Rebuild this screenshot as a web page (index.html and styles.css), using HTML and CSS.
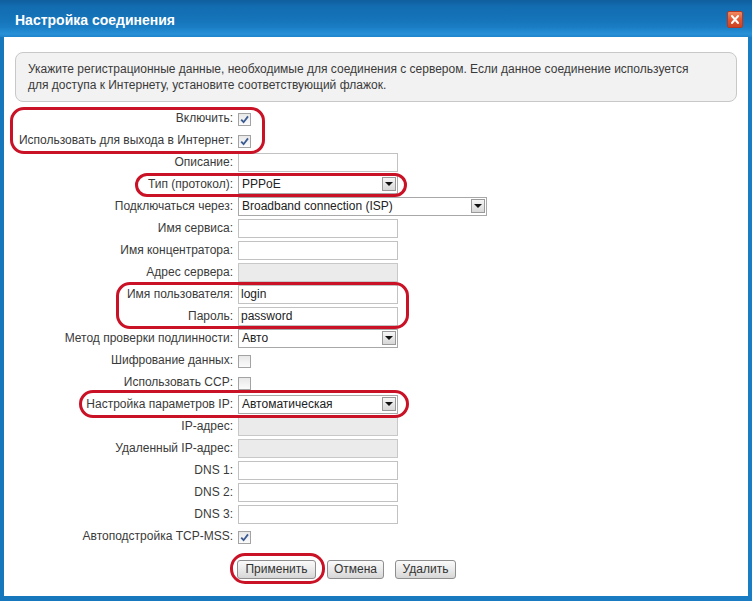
FILE: index.html
```html
<!DOCTYPE html>
<html lang="ru">
<head>
<meta charset="utf-8">
<title>Настройка соединения</title>
<link rel="stylesheet" href="styles.css">
</head>
<body>
<div class="window">
  <div class="titlebar">
    <span class="title">Настройка соединения</span>
    <span class="close"><svg viewBox="0 0 16 17" width="16" height="17"><path d="M4.5 4.5 L11.5 12.5 M11.5 4.5 L4.5 12.5" stroke="#fff" stroke-width="2.2" stroke-linecap="round"/></svg></span>
  </div>
  <div class="content">
    <div class="info">Укажите регистрационные данные, необходимые для соединения с сервером. Если данное соединение используется для доступа к Интернету, установите соответствующий флажок.</div>
    <div class="form">
      <label class="lbl">Включить:</label>
      <div class="fld"><span class="cb on"><svg viewBox="0 0 13 13" width="13" height="13"><path d="M3.2 6.6 L5.6 9.2 L10 3.4" fill="none" stroke="#3a5a92" stroke-width="1.8"/></svg></span></div>

      <label class="lbl">Использовать для выхода в Интернет:</label>
      <div class="fld"><span class="cb on"><svg viewBox="0 0 13 13" width="13" height="13"><path d="M3.2 6.6 L5.6 9.2 L10 3.4" fill="none" stroke="#3a5a92" stroke-width="1.8"/></svg></span></div>

      <label class="lbl">Описание:</label>
      <div class="fld"><span class="inp"></span></div>

      <label class="lbl">Тип (протокол):</label>
      <div class="fld"><span class="sel"><span class="val">PPPoE</span><span class="arr"><svg viewBox="0 0 8 4" width="8" height="4"><path d="M0 0 H8 L4 4 Z" fill="#111"/></svg></span></span></div>

      <label class="lbl">Подключаться через:</label>
      <div class="fld"><span class="sel wide"><span class="val">Broadband connection (ISP)</span><span class="arr"><svg viewBox="0 0 8 4" width="8" height="4"><path d="M0 0 H8 L4 4 Z" fill="#111"/></svg></span></span></div>

      <label class="lbl">Имя сервиса:</label>
      <div class="fld"><span class="inp"></span></div>

      <label class="lbl">Имя концентратора:</label>
      <div class="fld"><span class="inp"></span></div>

      <label class="lbl">Адрес сервера:</label>
      <div class="fld"><span class="inp dis"></span></div>

      <label class="lbl">Имя пользователя:</label>
      <div class="fld"><span class="inp">login</span></div>

      <label class="lbl">Пароль:</label>
      <div class="fld"><span class="inp">password</span></div>

      <label class="lbl">Метод проверки подлинности:</label>
      <div class="fld"><span class="sel"><span class="val">Авто</span><span class="arr"><svg viewBox="0 0 8 4" width="8" height="4"><path d="M0 0 H8 L4 4 Z" fill="#111"/></svg></span></span></div>

      <label class="lbl">Шифрование данных:</label>
      <div class="fld"><span class="cb"></span></div>

      <label class="lbl">Использовать CCP:</label>
      <div class="fld"><span class="cb"></span></div>

      <label class="lbl">Настройка параметров IP:</label>
      <div class="fld"><span class="sel"><span class="val">Автоматическая</span><span class="arr"><svg viewBox="0 0 8 4" width="8" height="4"><path d="M0 0 H8 L4 4 Z" fill="#111"/></svg></span></span></div>

      <label class="lbl">IP-адрес:</label>
      <div class="fld"><span class="inp dis"></span></div>

      <label class="lbl">Удаленный IP-адрес:</label>
      <div class="fld"><span class="inp dis"></span></div>

      <label class="lbl">DNS 1:</label>
      <div class="fld"><span class="inp"></span></div>

      <label class="lbl">DNS 2:</label>
      <div class="fld"><span class="inp"></span></div>

      <label class="lbl">DNS 3:</label>
      <div class="fld"><span class="inp"></span></div>

      <label class="lbl">Автоподстройка TCP-MSS:</label>
      <div class="fld"><span class="cb on"><svg viewBox="0 0 13 13" width="13" height="13"><path d="M3.2 6.6 L5.6 9.2 L10 3.4" fill="none" stroke="#3a5a92" stroke-width="1.8"/></svg></span></div>
    </div>
    <div class="buttons">
      <span class="btn b1">Применить</span>
      <span class="btn b2">Отмена</span>
      <span class="btn b3">Удалить</span>
    </div>
  </div>
  <div class="mark m1"></div>
  <div class="mark m2"></div>
  <div class="mark m3"></div>
  <div class="mark m4"></div>
  <div class="mark m5"></div>
</div>
</body>
</html>
```
FILE: styles.css
```css
html, body {
  margin: 0;
  padding: 0;
  width: 752px;
  height: 601px;
  overflow: hidden;
  background: #fff;
}
.window {
  position: relative;
  width: 752px;
  height: 601px;
  box-sizing: border-box;
  background: linear-gradient(to right, #1777bd, #1a7cc2);
  display: flex;
  flex-direction: column;
  font-family: "Liberation Sans", Arial, sans-serif;
  font-size: 12px;
  color: #3a3a3a;
}
.titlebar {
  height: 37px;
  flex: none;
  display: flex;
  align-items: center;
  justify-content: space-between;
  padding: 0 9px 0 15px;
  box-sizing: border-box;
  background: linear-gradient(to bottom, #0f5d9c 0px, #136cb0 6px, #1574ba 20px, #1a7dc4 27px, #2089cf 31px, #2790d6 34px, #1e84cc 37px);
}
.title {
  color: #fff;
  font-weight: bold;
  font-size: 14px;
  margin-top: 2px;
}
.close {
  width: 16px;
  height: 17px;
  margin-top: 1px;
  box-sizing: border-box;
  border: 1px solid #b03a25;
  border-radius: 2px;
  background: linear-gradient(to bottom, #f08a62, #e0532e 55%, #cc4424);
  display: flex;
  align-items: center;
  justify-content: center;
}
.close svg {
  display: block;
}
.content {
  flex: 1;
  margin: 0 4px 5px 4px;
  background: #fff;
  display: flex;
  flex-direction: column;
}
.info {
  margin: 15px 11px 0 11px;
  height: 50px;
  box-sizing: border-box;
  border: 1px solid #c8c8c8;
  border-radius: 8px;
  background: #f2f2f2;
  padding: 8px 30px 8px 12px;
  line-height: 16px;
}
.form {
  margin-top: 5px;
  display: grid;
  grid-template-columns: 229px 1fr;
  column-gap: 5px;
  grid-auto-rows: 22px;
  align-items: center;
}
.lbl {
  text-align: right;
  white-space: nowrap;
  line-height: 14px;
}
.fld {
  display: flex;
  align-items: center;
}
.inp {
  width: 160px;
  height: 19px;
  box-sizing: border-box;
  border: 1px solid #c2c2c2;
  background: #fff;
  padding: 0 2px;
  line-height: 17px;
  color: #222;
  font-size: 12px;
}
.inp.dis {
  background: #ebebeb;
  border-color: #c8c8c8;
}
.sel {
  width: 160px;
  height: 19px;
  box-sizing: border-box;
  border: 1px solid #a8a8a8;
  background: #fff;
  display: flex;
  align-items: center;
  justify-content: space-between;
  padding: 0 1px 0 3px;
  color: #222;
}
.sel.wide {
  width: 249px;
}
.arr {
  width: 14px;
  height: 14px;
  box-sizing: border-box;
  border: 1px solid #9a9a9a;
  background: linear-gradient(to bottom, #f6f6f6, #d8d8d8);
  display: flex;
  align-items: center;
  justify-content: center;
}
.arr svg {
  display: block;
}
.cb {
  width: 13px;
  height: 13px;
  box-sizing: border-box;
  border: 1px solid #a3a3a3;
  background: linear-gradient(to bottom, #e8e8e8, #fbfbfb);
  margin-top: 3px;
  position: relative;
}
.cb svg {
  position: absolute;
  left: -1px;
  top: -1px;
  display: block;
}
.buttons {
  display: flex;
  gap: 11px;
  margin: 13px 0 0 233px;
}
.btn {
  height: 19px;
  box-sizing: border-box;
  border: 1px solid #8e8e8e;
  border-radius: 3px;
  background: linear-gradient(to bottom, #fafafa, #e6e6e6 60%, #d6d6d6);
  line-height: 17px;
  text-align: center;
  color: #333;
}
.b1 { width: 79px; }
.b2 { width: 57px; }
.b3 { width: 61px; }
.mark {
  position: absolute;
  box-sizing: border-box;
  border: 3px solid #c91225;
}
.m1 { left: 10px; top: 107px; width: 255px; height: 47px; border-radius: 14px; }
.m2 { left: 135px; top: 173px; width: 272px; height: 24px; border-radius: 12px; }
.m3 { left: 116px; top: 282px; width: 293px; height: 47px; border-radius: 14px; }
.m4 { left: 79px; top: 390px; width: 330px; height: 28px; border-radius: 14px; }
.m5 { left: 230px; top: 553px; width: 95px; height: 31px; border-radius: 15px; }
```
